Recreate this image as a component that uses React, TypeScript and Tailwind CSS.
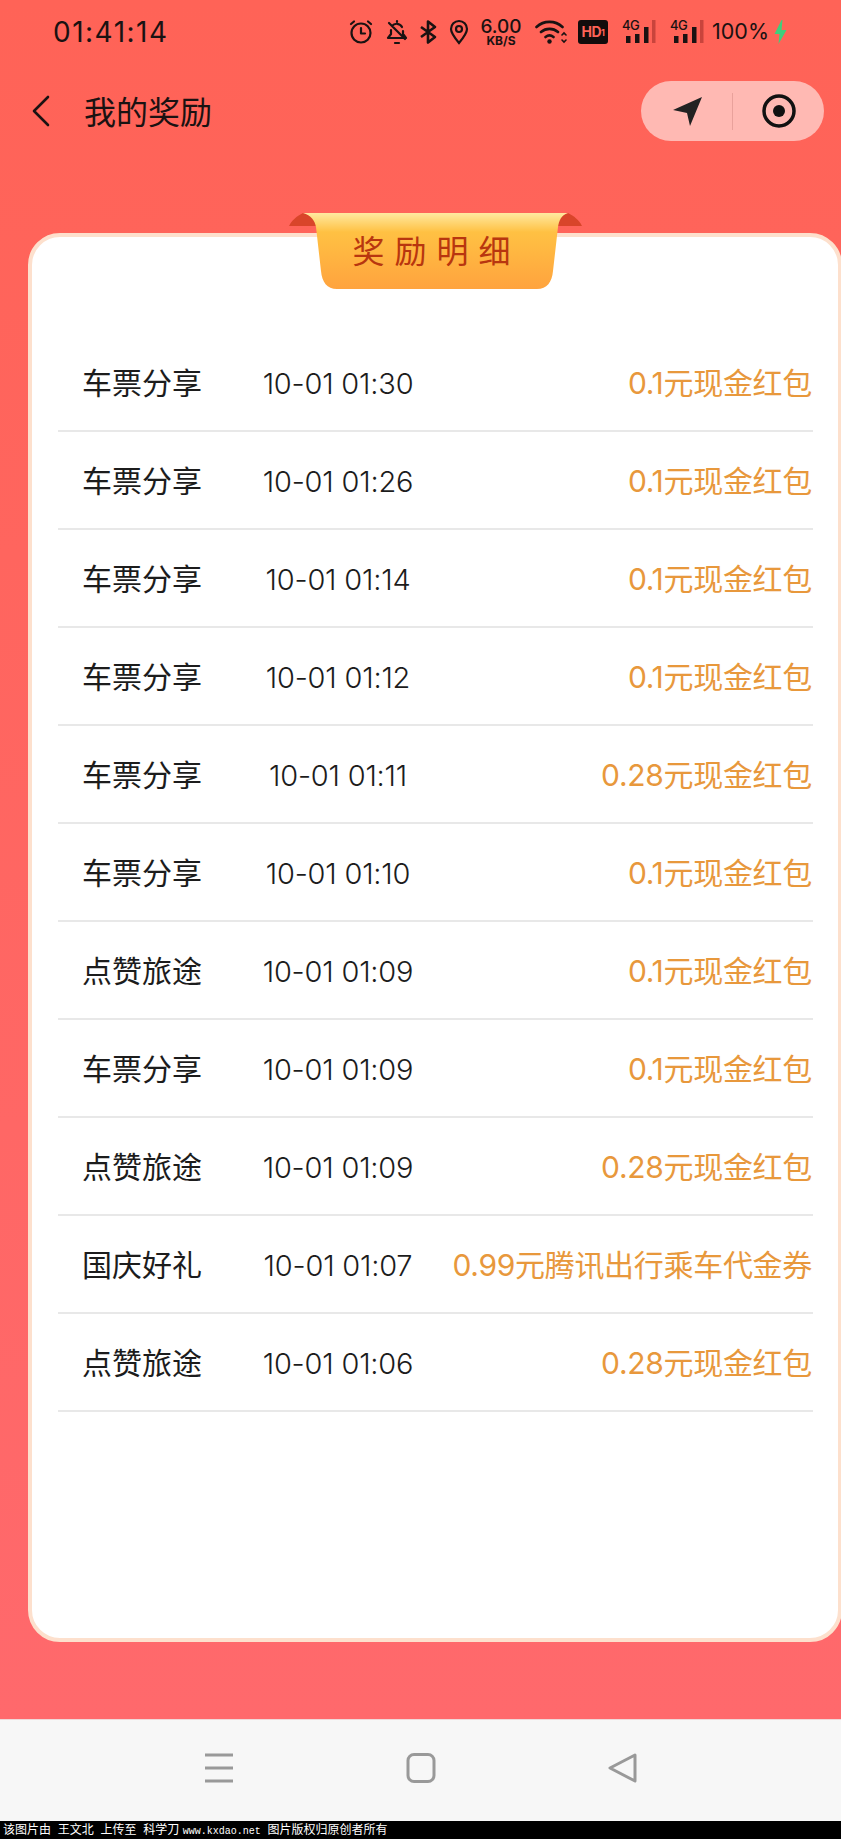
const FONT = "font-['Inter','Noto_Sans_CJK_SC',sans-serif]";

const rows = [
  ["车票分享", "10-01 01:30", "0.1元现金红包"],
  ["车票分享", "10-01 01:26", "0.1元现金红包"],
  ["车票分享", "10-01 01:14", "0.1元现金红包"],
  ["车票分享", "10-01 01:12", "0.1元现金红包"],
  ["车票分享", "10-01 01:11", "0.28元现金红包"],
  ["车票分享", "10-01 01:10", "0.1元现金红包"],
  ["点赞旅途", "10-01 01:09", "0.1元现金红包"],
  ["车票分享", "10-01 01:09", "0.1元现金红包"],
  ["点赞旅途", "10-01 01:09", "0.28元现金红包"],
  ["国庆好礼", "10-01 01:07", "0.99元腾讯出行乘车代金券"],
  ["点赞旅途", "10-01 01:06", "0.28元现金红包"],
];

function Signal() {
  return (
    <div className="relative w-[34px] h-[24px]">
      <span className="absolute left-0 top-[-1px] text-[13px] leading-[13px] font-medium tracking-[-0.5px] text-[#1a1212]">4G</span>
      <svg width="34" height="24" viewBox="0 0 34 24" className="absolute left-0 top-0">
        <rect x="4" y="16" width="4.500" height="7" fill="#1a1212" />
        <rect x="13" y="14" width="4.500" height="9" fill="#1a1212" />
        <rect x="22" y="7" width="4.500" height="16" fill="#1a1212" />
        <rect x="30" y="0" width="3.500" height="23" fill="#c9443c" />
      </svg>
    </div>
  );
}

function StatusBar() {
  return (
    <div className="h-[56px] flex items-center pl-[53px] pr-[53px] pt-[8px] text-[#1a1212]">
      <span className="text-[28px] tracking-[1.5px] leading-none">01:41:14</span>
      <div className="ml-auto flex items-center">
        <svg width="26" height="26" viewBox="0 0 26 26" fill="none" stroke="#1a1212" strokeWidth="2.2" strokeLinecap="round" strokeLinejoin="round">
          <circle cx="13" cy="14" r="9.5" />
          <path d="M13 9v5.5h4M3 5l3-2.5M23 5l-3-2.5" />
        </svg>
        <svg className="ml-[12px]" width="22" height="26" viewBox="0 0 22 26" fill="none" stroke="#1a1212" strokeWidth="2.2" strokeLinecap="round" strokeLinejoin="round">
          <path d="M6 7a6 6 0 0 1 10 1M17 12v3l3 4H2l3-4v-4M3 4l16 16M9 24h4M11 2v1" />
        </svg>
        <svg className="ml-[11px]" width="18" height="26" viewBox="0 0 18 26" fill="none" stroke="#1a1212" strokeWidth="2.6" strokeLinejoin="round">
          <path d="M2 8l14 10-7 5.500V2.500l7 5.500-14 10" />
        </svg>
        <svg className="ml-[12px]" width="20" height="26" viewBox="0 0 20 26" fill="none" stroke="#1a1212" strokeWidth="2.2">
          <path d="M10 24C5 18 2 14 2 10a8 8 0 0 1 16 0c0 4-3 8-8 14z" />
          <circle cx="10" cy="10" r="3" />
        </svg>
        <div className="ml-[12px] w-[40px] flex flex-col items-center font-medium leading-none">
          <span className="text-[19px] leading-[17px]">6.00</span>
          <span className="text-[12px] leading-[12px] font-bold">KB/S</span>
        </div>
        <svg className="ml-[14px]" width="32" height="26" viewBox="0 0 32 26" fill="none" stroke="#1a1212" strokeWidth="2.6" strokeLinecap="round">
          <path d="M1.500 8a19 19 0 0 1 26 0M6 13a13 13 0 0 1 17 0M10.500 18a6.500 6.500 0 0 1 8 0" />
          <circle cx="14.500" cy="22.500" r="2.200" fill="#1a1212" stroke="none" />
          <path d="M27 16l2-2 2 2M27 21l2 2 2-2" strokeWidth="1.600" />
        </svg>
        <div className="ml-[11px] w-[30px] h-[24px] rounded-[3px] bg-[#120c0c] text-[#ff6357] flex items-center justify-center text-[14px] font-bold leading-none tracking-[-0.5px]">
          HD<span className="text-[9px]">1</span>
        </div>
        <div className="ml-[14px]"><Signal /></div>
        <div className="ml-[14px]"><Signal /></div>
        <span className="ml-[8px] text-[21.500px] leading-none">100%</span>
        <svg className="ml-[4px]" width="15" height="24" viewBox="0 0 14 24">
          <path d="M8 0L1 14h5l-1 10 8-14H8l1-10z" fill="#3fcf7c" />
        </svg>
      </div>
    </div>
  );
}

function Header() {
  return (
    <div className="h-[60px] mt-[25px] flex items-center pl-[31px] pr-[17px]">
      <svg width="20" height="32" viewBox="0 0 20 32" fill="none" stroke="#1a1212" strokeWidth="2.600" strokeLinecap="round" strokeLinejoin="round">
        <path d="M17 2L3 16l14 14" />
      </svg>
      <span className="ml-[33px] pt-[3px] text-[32px] leading-none text-[#1a1212]">我的奖励</span>
      <div className="ml-auto w-[183px] h-[60px] rounded-full bg-[#ffb9b3] flex items-center">
        <div className="w-[91px] flex justify-center">
          <svg width="32" height="32" viewBox="0 0 32 32">
            <path d="M2 15L31 2 19 31l-3-13z" fill="#222" strokeLinejoin="round" />
          </svg>
        </div>
        <div className="w-px h-[37px] bg-[#e9a19b]" />
        <div className="flex-1 flex justify-center">
          <svg width="34" height="34" viewBox="0 0 34 34">
            <circle cx="17" cy="17" r="15" fill="none" stroke="#111" strokeWidth="3.500" />
            <circle cx="17" cy="17" r="6" fill="#111" />
          </svg>
        </div>
      </div>
    </div>
  );
}

function Ribbon() {
  return (
    <div className="absolute left-[257px] top-[-24px] w-[293px] h-[76px] flex items-center justify-center">
      <svg className="absolute left-0 top-0" width="293" height="76" viewBox="0 0 293 76">
        <defs>
          <linearGradient id="rib" x1="0" y1="0" x2="0" y2="1">
            <stop offset="0" stopColor="#ffe9a0" />
            <stop offset="0.25" stopColor="#ffc143" />
            <stop offset="1" stopColor="#ffa33e" />
          </linearGradient>
        </defs>
        <path d="M0 13C3 7 8 3 14 0h265c6 3 11 7 14 13z" fill="#d9452a" />
        <path d="M14 0H279C272 2 270 8 269 14L264 58C263 69 258 76 248 76H48C38 76 33 69 32 58L27 14C26 8 22 2 14 0z" fill="url(#rib)" />
      </svg>
      <span className="relative text-[32px] leading-none tracking-[10px] text-[#b8360f] pl-[2px] pt-[2px]">奖励明细</span>
    </div>
  );
}

function Card() {
  return (
    <div className="relative mt-[92px] ml-[28px] w-[814px] h-[1409px] bg-white border-[4px] border-[#fde0cd] rounded-[32px]">
      <Ribbon />
      <div className="pt-[97px] pl-[26px] pr-[25px]">
        {rows.map((r, i) => (
          <div key={i} className="relative h-[98px] flex items-center justify-between border-b-2 border-[#e8e8e8] pl-[24px] pr-[1px] pt-[2px] text-[30px] leading-none">
            <span className="text-[#1c1c1c]">{r[0]}</span>
            <span className="absolute left-[130px] w-[300px] text-center text-[#1c1c1c] text-[29px] font-light tracking-[-0.200px]">{r[1]}</span>
            <span className="text-[#e8983c] tracking-[-0.300px]">{r[2]}</span>
          </div>
        ))}
      </div>
    </div>
  );
}

export default function App() {
  return (
    <div className={`w-[841px] h-[1839px] overflow-hidden flex flex-col ${FONT}`}>
      <div className="h-[1719px] bg-gradient-to-b from-[#ff6357] to-[#ff696c]">
        <StatusBar />
        <Header />
        <Card />
      </div>
      <div className="h-[102px] bg-[#f7f7f7] border-t border-[#f0d8d8] flex items-center justify-center gap-[172px] pb-[6px]">
        <svg width="30" height="30" viewBox="0 0 30 30" stroke="#999" strokeWidth="3"><path d="M1 2h28M1 15h28M1 28h28" /></svg>
        <svg width="30" height="30" viewBox="0 0 30 30" fill="none" stroke="#999" strokeWidth="3"><rect x="2" y="1.500" width="26" height="27" rx="6" /></svg>
        <svg width="30" height="30" viewBox="0 0 30 30" fill="none" stroke="#999" strokeWidth="3" strokeLinejoin="round"><path d="M27 2L2 15l25 13z" /></svg>
      </div>
      <div className="h-[18px] bg-black text-white text-[12px] leading-[18px] pl-[3px] whitespace-pre">
        该图片由  王文北  上传至  科学刀 <span className="font-['Liberation_Mono',monospace] text-[10px]">www.kxdao.net</span>  图片版权归原创者所有
      </div>
    </div>
  );
}
